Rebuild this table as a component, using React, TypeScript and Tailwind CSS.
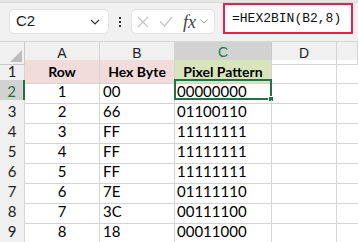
import React from 'react';

const rows = [
  { n: 1, hex: '00', bits: '00000000' },
  { n: 2, hex: '66', bits: '01100110' },
  { n: 3, hex: 'FF', bits: '11111111' },
  { n: 4, hex: 'FF', bits: '11111111' },
  { n: 5, hex: 'FF', bits: '11111111' },
  { n: 6, hex: '7E', bits: '01111110' },
  { n: 7, hex: '3C', bits: '00111100' },
  { n: 8, hex: '18', bits: '00011000' },
];

const cols = ['A', 'B', 'C', 'D', ''];

const grid = 'grid grid-cols-[25px_75px_75px_97px_65px_1fr]';

const App = () => {
  return (
    <div className="w-[358px] h-[242px] overflow-hidden bg-white font-['Lato',sans-serif] text-[15px] text-black">
      {/* Formula bar */}
      <div className="h-[42px] bg-[#f1f1f1] border-b border-[#d6d6d6] relative">
        <div className="h-[3px] bg-[#e6e6e6] border-b border-[#dadada]" />
        <div className="flex items-center pl-[9px] pt-[6px]">
          <div className="w-[100px] h-[25px] bg-white rounded-[5px] border border-[#e2e2e2] flex items-center justify-between pl-[6px] pr-[8px]">
            <span className="font-['Liberation_Sans',sans-serif] text-[15px] text-[#1a1a1a]">C2</span>
            <svg width="10" height="6" viewBox="0 0 10 6" fill="none" stroke="#333" strokeWidth="1.2">
              <path d="M1 1l4 4 4-4" />
            </svg>
          </div>
          <div className="w-[22px] flex flex-col items-center gap-[2px]">
            <span className="w-[2px] h-[2px] bg-[#333]" />
            <span className="w-[2px] h-[2px] bg-[#333]" />
            <span className="w-[2px] h-[2px] bg-[#333]" />
          </div>
          <div className="w-[84px] h-[25px] bg-white rounded-[5px] border border-[#e2e2e2] flex items-center pl-[5px] gap-[10px]">
            <svg width="12" height="12" viewBox="0 0 12 12" stroke="#c4c4c4" strokeWidth="1.2">
              <path d="M1 1l10 10M11 1l-10 10" />
            </svg>
            <svg width="14" height="11" viewBox="0 0 14 11" fill="none" stroke="#c4c4c4" strokeWidth="1.2">
              <path d="M1 5.5l4.5 4.5 7.5-9" />
            </svg>
            <div className="flex items-center gap-[4px]">
              <span className="font-['Liberation_Serif',serif] italic text-[18px] text-[#444] leading-none">fx</span>
              <svg width="8" height="5" viewBox="0 0 8 5" fill="none" stroke="#999" strokeWidth="1">
                <path d="M0.5 0.5l3.5 3.5 3.5-3.5" />
              </svg>
            </div>
          </div>
        </div>
        <div className="absolute left-[223px] top-[3px] w-[130px] h-[31px] border-2 border-[#e6204f] bg-white flex items-center pl-[7px]">
          <span className="font-['Liberation_Mono',monospace] text-[13px] text-[#111]">=HEX2BIN(B2,8)</span>
        </div>
      </div>

      {/* Column headers */}
      <div className={`${grid} h-[18px] bg-[#f0f0f0] text-[14px] font-['Liberation_Sans',sans-serif]`}>
        <div className="border-r border-b border-[#c8c8c8] relative overflow-hidden">
          <svg className="absolute right-[2px] bottom-[2px]" width="12" height="12" viewBox="0 0 12 12">
            <path d="M12 0L12 12L0 12Z" fill="#bdbdbd" />
          </svg>
        </div>
        {cols.map((c) => (
          <div
            key={c || 'e'}
            className={
              c === 'C'
                ? 'bg-[#d2d2d2] border-r border-[#c8c8c8] border-b-2 border-b-[#217346] text-[#217346] flex items-center justify-center'
                : 'border-r border-b border-[#d4d4d4] flex items-center justify-center text-[#222]'
            }
          >
            {c}
          </div>
        ))}
      </div>

      {/* Row 1 */}
      <div className={`${grid} h-[20px]`}>
        <div className="bg-[#f0f0f0] border-r border-b border-[#d4d4d4] flex items-center justify-center text-[#222]">1</div>
        <div className="bg-[#f2dcdb] border-r border-b border-[#d4d4d4] flex items-center justify-center font-bold text-[14px]">Row</div>
        <div className="bg-[#f2dcdb] border-r border-b border-[#d4d4d4] flex items-center justify-center font-bold text-[14px]">Hex Byte</div>
        <div className="bg-[#d8e4bc] border-r border-b border-[#d4d4d4] flex items-center justify-center font-bold text-[14px]">Pixel Pattern</div>
        <div className="border-r border-b border-[#d4d4d4]" />
        <div className="border-b border-[#d4d4d4]" />
      </div>

      {rows.map((r, i) => {
        const sel = i === 0;
        return (
          <div key={r.n} className={`${grid} h-[20px]`}>
            <div
              className={
                sel
                  ? 'bg-[#d2d2d2] border-b border-[#c8c8c8] border-r-2 border-r-[#217346] text-[#217346] flex items-center justify-center'
                  : 'bg-[#f0f0f0] border-r border-b border-[#d4d4d4] flex items-center justify-center text-[#222]'
              }
            >
              {r.n + 1}
            </div>
            <div className="border-r border-b border-[#d4d4d4] flex items-center justify-center">{r.n}</div>
            <div className="border-r border-b border-[#d4d4d4] flex items-center pl-[3px]">{r.hex}</div>
            <div className="border-r border-b border-[#d4d4d4] flex items-center pl-[2px] relative">
              {r.bits}
              {sel && (
                <div className="absolute -left-px -top-px w-[98px] h-[21px] border-2 border-[#217346]">
                  <div className="absolute -right-[4px] -bottom-[4px] w-[6px] h-[6px] bg-[#217346] border border-white" />
                </div>
              )}
            </div>
            <div className="border-r border-b border-[#d4d4d4]" />
            <div className="border-b border-[#d4d4d4]" />
          </div>
        );
      })}
    </div>
  );
};

export default App;
